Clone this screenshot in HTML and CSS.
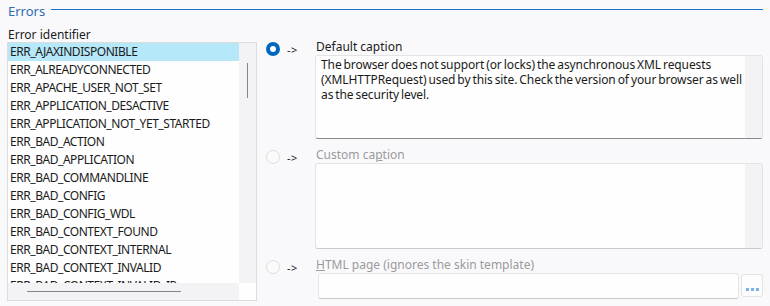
FILE: index.html
```html
<!DOCTYPE html>
<html lang="en">
<head>
    <meta charset="UTF-8">
    <title>Errors</title>
    <link rel="stylesheet" href="styles.css">
</head>
<body>
    <div class="panel">
        <div class="group-title">
            <span>Errors</span>
            <div class="rule"></div>
        </div>
        <div class="group-body">
            <div class="ident">
                <div class="field-label">Error identifier</div>
                <div class="listbox">
                    <div class="items">
                        <div class="item selected">ERR_AJAXINDISPONIBLE</div>
                        <div class="item">ERR_ALREADYCONNECTED</div>
                        <div class="item">ERR_APACHE_USER_NOT_SET</div>
                        <div class="item">ERR_APPLICATION_DESACTIVE</div>
                        <div class="item">ERR_APPLICATION_NOT_YET_STARTED</div>
                        <div class="item">ERR_BAD_ACTION</div>
                        <div class="item">ERR_BAD_APPLICATION</div>
                        <div class="item">ERR_BAD_COMMANDLINE</div>
                        <div class="item">ERR_BAD_CONFIG</div>
                        <div class="item">ERR_BAD_CONFIG_WDL</div>
                        <div class="item">ERR_BAD_CONTEXT_FOUND</div>
                        <div class="item">ERR_BAD_CONTEXT_INTERNAL</div>
                        <div class="item">ERR_BAD_CONTEXT_INVALID</div>
                        <div class="item">ERR_BAD_CONTEXT_INVALID_IP</div>
                    </div>
                    <div class="vscroll"><span class="vthumb"></span></div>
                    <div class="hscroll"><span class="hthumb"></span></div>
                    <div class="corner"></div>
                </div>
            </div>

            <div class="options">
                <div class="option">
                    <div class="choice">
                        <span class="radio checked"></span>
                        <span class="arrow">-&gt;</span>
                    </div>
                    <div class="field">
                        <div class="field-label">Default caption</div>
                        <div class="memo memo-default">
                            <div class="memo-text">The browser does not support (or locks) the asynchronous XML requests (XMLHTTPRequest) used by this site. Check the version of your browser as well as the security level.</div>
                            <div class="memo-track"></div>
                        </div>
                    </div>
                </div>

                <div class="option">
                    <div class="choice">
                        <span class="radio"></span>
                        <span class="arrow">-&gt;</span>
                    </div>
                    <div class="field">
                        <div class="field-label disabled">Custom ca<u>p</u>tion</div>
                        <div class="memo memo-custom">
                            <div class="memo-text"></div>
                            <div class="memo-track"></div>
                        </div>
                    </div>
                </div>

                <div class="option">
                    <div class="choice">
                        <span class="radio"></span>
                        <span class="arrow">-&gt;</span>
                    </div>
                    <div class="field">
                        <div class="field-label disabled"><u>H</u>TML page (ignores the skin template)</div>
                        <div class="file-row">
                            <div class="edit"></div>
                            <button class="browse"><span></span><span></span><span></span></button>
                        </div>
                    </div>
                </div>
            </div>
        </div>
    </div>
</body>
</html>
```

FILE: styles.css
```css
:root {
    --page-bg: #f9f9fb;
    --box-bg: #fdfefd;
    --track: #f3f2f5;
    --border: #dcdcdc;
    --accent: #0067c0;
    --title: #2e6db4;
    --text: #1b1b1b;
    --muted: #9b9b9b;
}

* {
    margin: 0;
    padding: 0;
    box-sizing: border-box;
}

body {
    font-family: "Noto Sans", "Open Sans", sans-serif;
    font-size: 12px;
    color: var(--text);
    background: var(--page-bg);
    width: 770px;
    height: 306px;
    overflow: hidden;
}

.panel {
    padding: 2px 7px 0 7px;
}

.group-title {
    display: flex;
    align-items: center;
    gap: 6px;
    height: 17px;
    color: var(--title);
    font-size: 13px;
    padding-left: 1px;
}

.group-title .rule {
    flex: 1;
    height: 1px;
    background: #1a73c9;
    margin-top: -2px;
}

.group-body {
    display: flex;
    gap: 9px;
    margin-top: 8px;
}

.field-label {
    height: 15px;
    line-height: 15px;
    padding-left: 1px;
}

.field-label.disabled {
    color: var(--muted);
}

/* list of identifiers */

.ident {
    width: 250px;
}

.listbox {
    display: grid;
    grid-template-columns: 1fr 17px;
    grid-template-rows: 240px 17px;
    height: 259px;
    border: 1px solid var(--border);
    background: var(--box-bg);
}

.items {
    overflow: hidden;
}

.item {
    height: 18px;
    line-height: 18px;
    padding-left: 2px;
    white-space: nowrap;
    letter-spacing: -0.45px;
}

.item.selected {
    background: #b5e8f9;
}

.vscroll {
    background: var(--track);
    position: relative;
}

.vthumb {
    position: absolute;
    left: 8px;
    top: 20px;
    width: 1px;
    height: 35px;
    background: #858585;
}

.hscroll {
    background: var(--track);
    position: relative;
}

.hthumb {
    position: absolute;
    left: 19px;
    top: 8px;
    height: 1px;
    width: 154px;
    background: #858585;
}

.corner {
    background: var(--box-bg);
}

/* right-hand options */

.options {
    flex: 1;
    display: flex;
    flex-direction: column;
    gap: 8px;
    margin-top: 12px;
}

.option {
    display: flex;
}

.choice {
    width: 49px;
    display: flex;
    align-items: flex-start;
    padding-top: 3px;
    gap: 7px;
}

.radio {
    width: 14px;
    height: 14px;
    border-radius: 50%;
    border: 1px solid #dedede;
    background: #fbfbfb;
}

.radio.checked {
    border: 4px solid var(--accent);
    background: #fff;
}

.arrow {
    font-size: 11px;
    line-height: 15px;
    letter-spacing: 0.5px;
}

.field {
    flex: 1;
}

.memo {
    display: flex;
    border: 1px solid #e3e3e3;
    border-bottom-color: #8a8a8a;
    border-radius: 3px;
    background: var(--box-bg);
    overflow: hidden;
    margin-top: 1px;
}

.memo-default {
    height: 84px;
}

.memo-custom {
    height: 86px;
    border-bottom-color: #c8c8c8;
}

.memo-text {
    flex: 1;
    padding: 1px 0 1px 5px;
    line-height: 15px;
    letter-spacing: -0.1px;
    word-spacing: -1px;
}

.memo-track {
    width: 17px;
    background: var(--track);
}

.file-row {
    display: flex;
    gap: 2px;
    margin-top: 1px;
    padding-left: 3px;
}

.edit {
    flex: 1;
    height: 26px;
    border: 1px solid #e6e6e6;
    border-bottom-color: #c8c8c8;
    border-radius: 3px;
    background: var(--box-bg);
}

.browse {
    width: 22px;
    height: 23px;
    margin-top: 1px;
    border: 1px solid #e3e3e3;
    border-radius: 3px;
    background: #fdfdfd;
    display: flex;
    align-items: flex-end;
    justify-content: center;
    gap: 2px;
    padding-bottom: 5px;
}

.browse span {
    width: 3px;
    height: 3px;
    background: #7ab4ea;
}
```
